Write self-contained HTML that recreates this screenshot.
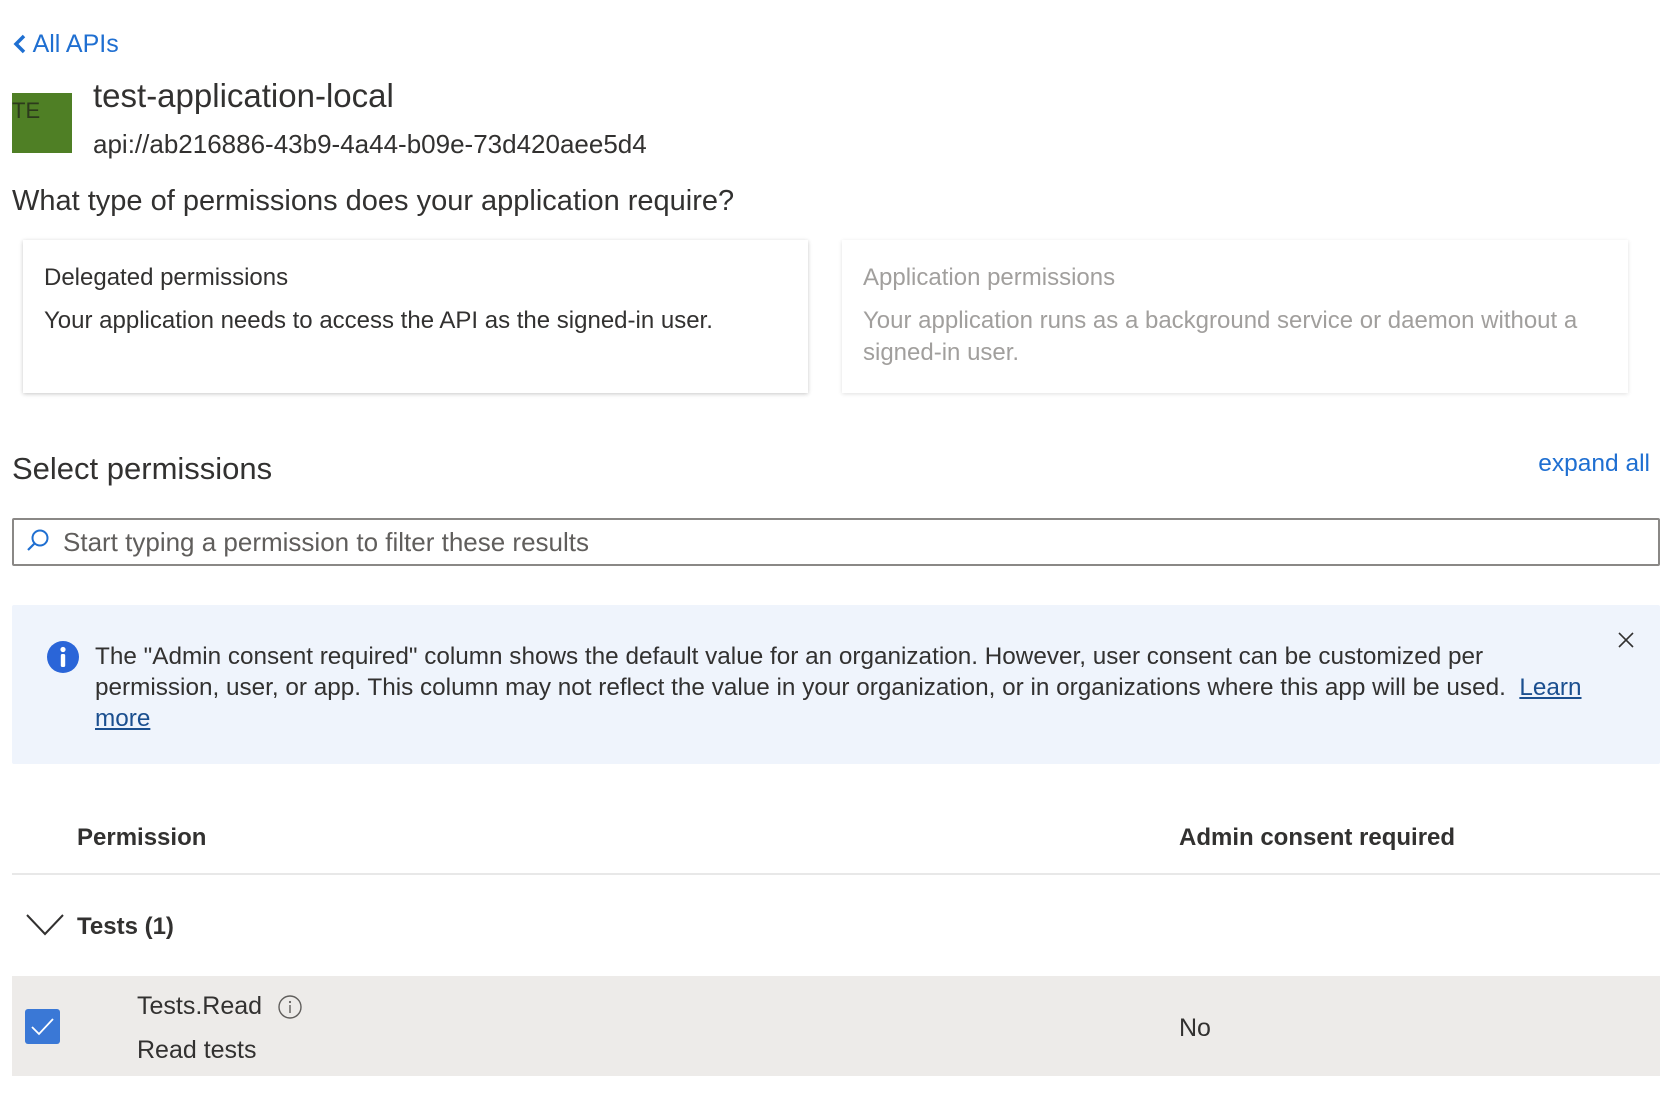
<!DOCTYPE html>
<html><head><meta charset="utf-8"><style>
body{margin:0;width:1674px;height:1106px;background:#fff;font-family:"Liberation Sans",sans-serif;color:#323130;position:relative;overflow:hidden}
.a{position:absolute;white-space:nowrap;line-height:1}
</style></head><body>
<div class="a" style="left:13px;top:32px;font-size:25px;color:#1f6fd1"><svg width="14" height="20" viewBox="0 0 14 20" style="vertical-align:-2px"><path d="M11 2 L3 10 L11 18" stroke="#1f6fd1" stroke-width="3.5" fill="none"/></svg> All APIs</div>
<div class="a" style="left:12px;top:93px;width:60px;height:60px;background:#4f7f25"></div>
<div class="a" style="left:12px;top:100px;font-size:22px;color:#2c3a1c">TE</div>
<div class="a" style="left:93px;top:79px;font-size:33px">test-application-local</div>
<div class="a" style="left:93px;top:131px;font-size:26px">api://ab216886-43b9-4a44-b09e-73d420aee5d4</div>
<div class="a" style="left:12px;top:187px;font-size:29px">What type of permissions does your application require?</div>
<div class="a" style="left:23px;top:240px;width:785px;height:153px;box-shadow:0 1px 4px rgba(0,0,0,.22)"></div>
<div class="a" style="left:44px;top:266px;font-size:24px">Delegated permissions</div>
<div class="a" style="left:44px;top:309px;font-size:24px">Your application needs to access the API as the signed-in user.</div>
<div class="a" style="left:842px;top:240px;width:786px;height:153px;box-shadow:0 1px 4px rgba(0,0,0,.12)"></div>
<div class="a" style="left:863px;top:266px;font-size:24px;color:#a19f9d">Application permissions</div>
<div class="a" style="left:863px;top:305px;font-size:24px;color:#a19f9d;line-height:32px">Your application runs as a background service or daemon without a<br>signed-in user.</div>
<div class="a" style="left:12px;top:453px;font-size:31px">Select permissions</div>
<div class="a" style="right:24px;top:452px;font-size:24.5px;color:#1f6fd1">expand all</div>
<div class="a" style="left:12px;top:518px;width:1644px;height:44px;border:2px solid #8a8886;border-radius:2px"></div>
<svg class="a" style="left:25px;top:528px" width="26" height="26" viewBox="0 0 26 26"><circle cx="15" cy="10" r="7.5" stroke="#1f6fd1" stroke-width="2" fill="none"/><path d="M9.5 15.5 L3 22" stroke="#1f6fd1" stroke-width="2.2"/></svg>
<div class="a" style="left:63px;top:529px;font-size:26px;color:#605e5c">Start typing a permission to filter these results</div>
<div class="a" style="left:12px;top:605px;width:1648px;height:159px;background:#eff4fc;border-radius:2px"></div>
<svg class="a" style="left:46px;top:640px" width="34" height="34" viewBox="0 0 34 34"><circle cx="17" cy="17" r="16" fill="#2a65d8"/><circle cx="17" cy="9.5" r="2.6" fill="#fff"/><rect x="14.8" y="14" width="4.4" height="13" rx="1.5" fill="#fff"/></svg>
<div class="a" style="left:95px;top:641px;font-size:24.3px;line-height:31px;white-space:normal;width:1490px">The "Admin consent required" column shows the default value for an organization. However, user consent can be customized per permission, user, or app. This column may not reflect the value in your organization, or in organizations where this app will be used. &nbsp;<span style="color:#1b4f8f;text-decoration:underline">Learn more</span></div>
<svg class="a" style="left:1616px;top:630px" width="20" height="20" viewBox="0 0 20 20"><path d="M3 3 L17 17 M17 3 L3 17" stroke="#323130" stroke-width="1.6"/></svg>
<div class="a" style="left:77px;top:826px;font-size:24px;font-weight:bold">Permission</div>
<div class="a" style="left:1179px;top:826px;font-size:24px;font-weight:bold">Admin consent required</div>
<div class="a" style="left:12px;top:873px;width:1648px;height:2px;background:#e8e8e8"></div>
<svg class="a" style="left:25px;top:912px" width="40" height="26" viewBox="0 0 40 26"><path d="M2 3 L20 22 L38 3" stroke="#323130" stroke-width="2" fill="none"/></svg>
<div class="a" style="left:77px;top:915px;font-size:24px;font-weight:bold">Tests (1)</div>
<div class="a" style="left:12px;top:976px;width:1648px;height:100px;background:#edebe9"></div>
<div class="a" style="left:25px;top:1009px;width:35px;height:35px;background:#3a78d6;border-radius:3px"></div>
<svg class="a" style="left:25px;top:1009px" width="35" height="35" viewBox="0 0 35 35"><path d="M7 18 L14 25 L28 10" stroke="#fff" stroke-width="1.8" fill="none"/></svg>
<div class="a" style="left:137px;top:994px;font-size:25px">Tests.Read</div>
<svg class="a" style="left:277px;top:994px" width="26" height="26" viewBox="0 0 26 26"><circle cx="13" cy="13" r="11" stroke="#605e5c" stroke-width="1.4" fill="none"/><circle cx="13" cy="8" r="1.1" fill="#605e5c"/><path d="M13 11 V19" stroke="#605e5c" stroke-width="1.4"/></svg>
<div class="a" style="left:137px;top:1038px;font-size:25px">Read tests</div>
<div class="a" style="left:1179px;top:1016px;font-size:25px">No</div>
</body></html>
